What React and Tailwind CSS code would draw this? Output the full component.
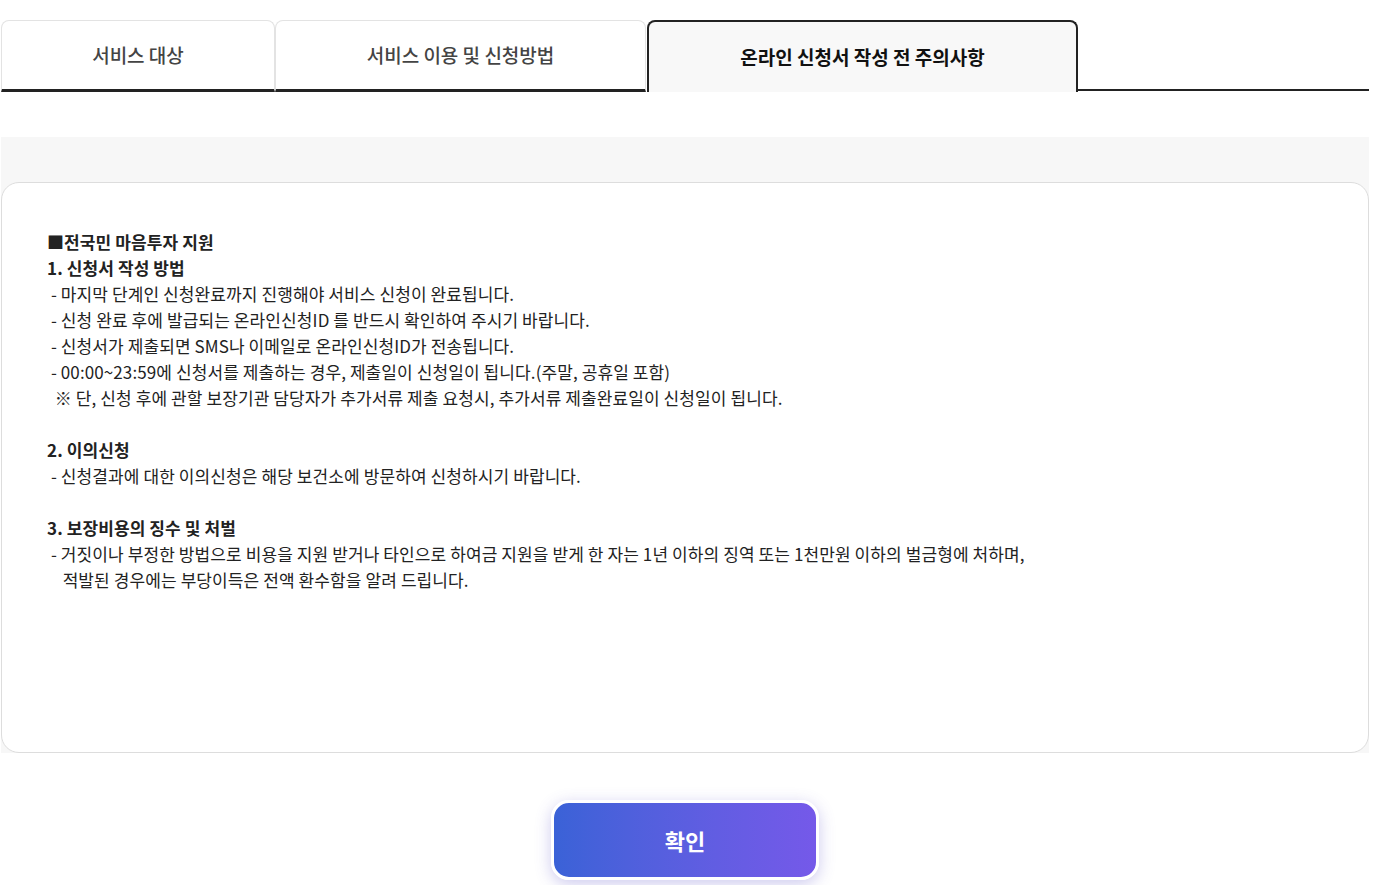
export default function App() {
  const TABS = [
    { label: '서비스 대상', w: 'w-[274px]' },
    { label: '서비스 이용 및 신청방법', w: 'w-[371px]' },
  ]

  return (
    <div className="min-h-screen bg-white" style={{ fontFamily: '"Noto Sans CJK KR", "Noto Sans", sans-serif' }}>
      <div className="w-[1368px] ml-px pt-5">
        {/* Tabs */}
        <div className="flex items-end h-[72px]">
          {TABS.map((t) => (
            <button
              key={t.label}
              className={`${t.w} h-full flex items-center justify-center pt-px border border-[#e3e3e3] border-b-[3px] border-b-[#222] rounded-t-lg bg-white text-[19px] font-medium text-[#444]`}
            >
              {t.label}
            </button>
          ))}
          <button className="w-[431px] h-full ml-px flex items-center justify-center border-2 border-b-0 border-[#222] rounded-t-lg bg-[#f8f8f8] text-[19px] font-bold text-[#111]">
            온라인 신청서 작성 전 주의사항
          </button>
          <div className="flex-1 h-[2px] mb-px bg-[#222]" />
        </div>

        {/* Content */}
        <div className="mt-[45px] bg-[#f7f7f7] pt-[45px]">
          <div className="h-[571px] bg-white border border-[#dddddd] rounded-[18px] px-[45px] pt-[46px] text-[17px] leading-[26px] text-[#222] tracking-[0.1px]">
            <p className="font-bold">■전국민 마음투자 지원</p>
            <p className="font-bold">1. 신청서 작성 방법</p>
            <p>&nbsp;- 마지막 단계인 신청완료까지 진행해야 서비스 신청이 완료됩니다.</p>
            <p>&nbsp;- 신청 완료 후에 발급되는 온라인신청ID 를 반드시 확인하여 주시기 바랍니다.</p>
            <p>&nbsp;- 신청서가 제출되면 SMS나 이메일로 온라인신청ID가 전송됩니다.</p>
            <p>&nbsp;- 00:00~23:59에 신청서를 제출하는 경우, 제출일이 신청일이 됩니다.(주말, 공휴일 포함)</p>
            <p>&nbsp;&nbsp;※ 단, 신청 후에 관할 보장기관 담당자가 추가서류 제출 요청시, 추가서류 제출완료일이 신청일이 됩니다.</p>
            <p>&nbsp;</p>
            <p className="font-bold">2. 이의신청</p>
            <p>&nbsp;- 신청결과에 대한 이의신청은 해당 보건소에 방문하여 신청하시기 바랍니다.</p>
            <p>&nbsp;</p>
            <p className="font-bold">3. 보장비용의 징수 및 처벌</p>
            <p>&nbsp;- 거짓이나 부정한 방법으로 비용을 지원 받거나 타인으로 하여금 지원을 받게 한 자는 1년 이하의 징역 또는 1천만원 이하의 벌금형에 처하며,</p>
            <p>&nbsp;&nbsp;&nbsp;&nbsp;적발된 경우에는 부당이득은 전액 환수함을 알려 드립니다.</p>
          </div>
        </div>

        {/* Confirm */}
        <div className="flex justify-center pt-[47px]">
          <button className="w-[268px] h-[80px] rounded-[18px] border-[3px] border-white bg-gradient-to-r from-[#3a62d7] to-[#7559e9] shadow-[0_4px_16px_rgba(90,80,200,0.3)] text-white text-[22px] font-bold">
            확인
          </button>
        </div>
      </div>
    </div>
  )
}
